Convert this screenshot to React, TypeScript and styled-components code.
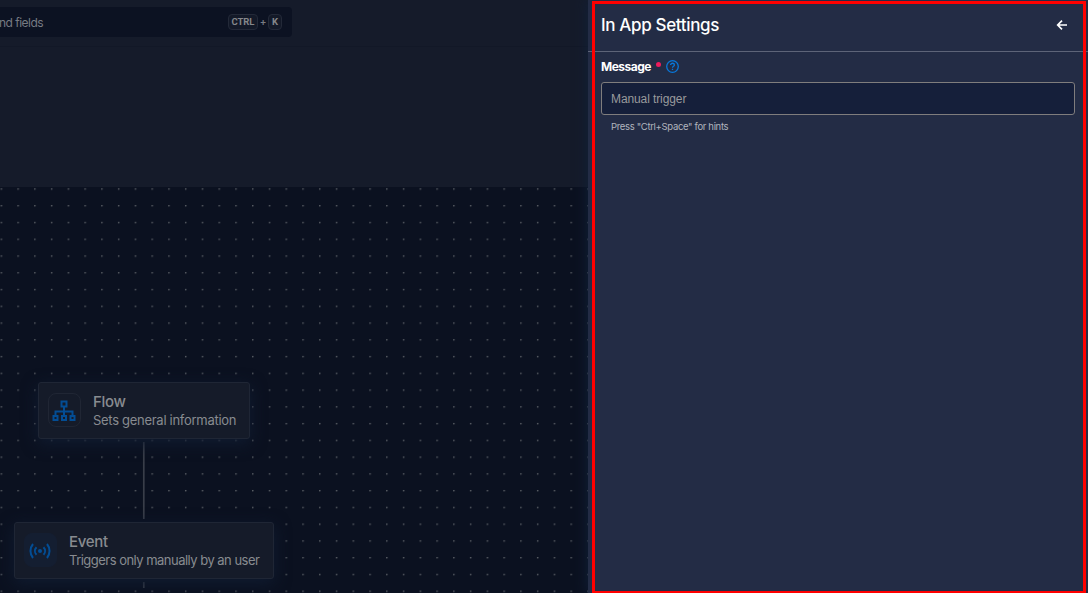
import React from "react";
import styled, { createGlobalStyle } from "styled-components";

const GlobalStyle = createGlobalStyle`
  * { box-sizing: border-box; }
  body { margin: 0; overflow: hidden; background: #0b1120; font-family: Inter, "Liberation Sans", sans-serif; }
`;

const Screen = styled.div`
  position: relative;
  display: flex;
  width: 1088px;
  height: 593px;
  overflow: hidden;
`;

const Workspace = styled.main`
  width: 588px;
  display: flex;
  flex-direction: column;
  background: #151b2a;
`;

const TopBar = styled.header`
  height: 47px;
  flex: none;
  padding-top: 7px;
  border-bottom: 1px solid #121827;
`;

const SearchBox = styled.div`
  width: 292px;
  height: 30px;
  padding-right: 10px;
  display: flex;
  align-items: center;
  border-radius: 0 4px 4px 0;
  background: #0c1222;
  color: #777b83;
`;

const SearchText = styled.span`
  flex: 1;
  font-size: 12px;
  line-height: 16px;
  letter-spacing: -0.52px;
  margin-left: -1px;
  padding-top: 2px;
  white-space: nowrap;
`;

const Key = styled.kbd<{ $width: number }>`
  width: ${(p) => p.$width}px;
  height: 16px;
  display: flex;
  align-items: center;
  justify-content: center;
  border: 1px solid #232938;
  border-radius: 4px;
  background: #131928;
  color: #85878b;
  font: 700 9.5px/14px Roboto, sans-serif;
  letter-spacing: -0.1px;
`;

const Plus = styled.span`
  width: 10px;
  padding-bottom: 2px;
  text-align: center;
  font-size: 10px;
  font-weight: 600;
  line-height: 14px;
`;

const Toolbar = styled.div`
  height: 140px;
  flex: none;
`;

const Canvas = styled.section`
  position: relative;
  flex: 1;
  background: #0b1120;
`;

const CanvasArt = styled.svg`
  position: absolute;
  inset: 0;
`;

const Node = styled.article<{ $x: number; $y: number; $width: number }>`
  position: absolute;
  left: ${(p) => p.$x}px;
  top: ${(p) => p.$y}px;
  width: ${(p) => p.$width}px;
  height: 56.5px;
  padding: 0 9px;
  display: flex;
  align-items: center;
  gap: 12px;
  border: 1px solid #1f2635;
  border-radius: 3px;
  background: #151b29;
  box-shadow: 0 4px 16px #101c31;
`;

const NodeIcon = styled.div<{ $filled?: boolean }>`
  width: 33px;
  height: 34px;
  flex: none;
  display: flex;
  align-items: center;
  justify-content: center;
  padding: 1px 1px 0 0;
  border: 1px solid ${(p) => (p.$filled ? "#141e31" : "#202634")};
  border-radius: 8px;
  background: ${(p) => (p.$filled ? "#141e31" : "transparent")};
  color: #034d94;
`;

const NodeText = styled.div`
  padding-top: 1px;
  color: #888b90;
  white-space: nowrap;
`;

const NodeTitle = styled.h2<{ $spacing: number }>`
  margin: 0;
  font-size: 15px;
  line-height: 19px;
  font-weight: 500;
  letter-spacing: ${(p) => p.$spacing}px;
`;

const NodeCaption = styled.p<{ $spacing: number }>`
  margin: 0;
  font-size: 13px;
  line-height: 19px;
  letter-spacing: ${(p) => p.$spacing}px;
`;

const Drawer = styled.aside`
  position: relative;
  width: 500px;
  background: #232c45;
  box-shadow: 0 0 12px #10203a;
  color: #fff;
`;

const DrawerHeader = styled.header`
  height: 52px;
  padding: 0 19px 1px 13px;
  display: flex;
  align-items: center;
  justify-content: space-between;
  border-bottom: 1px solid #5d6478;
`;

const DrawerTitle = styled.h1`
  margin: 0;
  font-size: 17px;
  line-height: 24px;
  font-weight: 500;
  letter-spacing: -0.35px;
`;

const BackButton = styled.button`
  width: 14px;
  height: 14px;
  padding: 0;
  display: flex;
  border: 0;
  background: none;
  color: #fff;
`;

const Form = styled.form`
  padding: 7px 13px;
`;

const LabelRow = styled.div`
  height: 16px;
  display: flex;
  align-items: center;
`;

const Label = styled.label`
  font-size: 12px;
  line-height: 16px;
  font-weight: 700;
  letter-spacing: -0.5px;
`;

const RequiredDot = styled.i`
  width: 5px;
  height: 5px;
  margin: -6px 5px 0;
  border-radius: 50%;
  background: #ee1b5b;
`;

const HelpIcon = styled.svg`
  margin-bottom: 2px;
`;

const Field = styled.div`
  height: 33px;
  margin-top: 7px;
  padding: 0 9px;
  display: flex;
  align-items: center;
  border: 1px solid #7f7d7d;
  border-radius: 3px;
  background: #151f3a;
  color: #999a9c;
  font-family: "Liberation Sans", Arial, sans-serif;
  font-size: 12px;
  letter-spacing: -0.1px;
`;

const Hint = styled.p`
  margin: 4px 0 0 10px;
  color: #b1b5be;
  font-size: 9.5px;
  line-height: 16px;
  letter-spacing: -0.33px;
`;

const Highlight = styled.div`
  position: absolute;
  left: 592px;
  top: 1px;
  width: 494px;
  height: 593px;
  border: 3px solid #ff0000;
  pointer-events: none;
`;

const FlowGlyph = () => (
  <svg width="24" height="22" viewBox="0 0 24 22" fill="none" stroke="currentColor" strokeWidth="2">
    <path d="M9.5 1.5h5v5h-5zM1.5 16h4v4h-4zM10 16h4v4h-4zM18.5 16h4v4h-4zM12 7v9M3.5 16v-4.5h17V16" />
  </svg>
);

const SignalGlyph = () => (
  <svg width="22" height="16" viewBox="0 0 22 16" fill="none" stroke="currentColor" strokeWidth="2">
    <circle cx="11" cy="8" r="2" fill="currentColor" stroke="none" />
    <path d="M7.5 4.2a5.5 5.5 0 0 0 0 7.6M14.5 4.2a5.5 5.5 0 0 1 0 7.6M4 1a11 11 0 0 0 0 14M18 1a11 11 0 0 1 0 14" />
  </svg>
);

export default function App() {
  return (
    <>
      <GlobalStyle />
      <Screen>
        <Workspace>
          <TopBar>
            <SearchBox>
              <SearchText>nd fields</SearchText>
              <Key $width={30}>CTRL</Key>
              <Plus>+</Plus>
              <Key $width={14}>K</Key>
            </SearchBox>
          </TopBar>
          <Toolbar />
          <Canvas>
            <CanvasArt width="588" height="406">
              <defs>
                <pattern id="dots" x="0.6" y="1.3" width="16.76" height="16.76" patternUnits="userSpaceOnUse">
                  <circle cx="0.8" cy="0.8" r="0.75" fill="#72757a" />
                </pattern>
              </defs>
              <rect width="588" height="406" fill="url(#dots)" />
              <path d="M143.8 255v77M143.8 395v6" stroke="#393e49" strokeWidth="1.7" />
            </CanvasArt>
            <Node $x={38} $y={195} $width={212}>
              <NodeIcon><FlowGlyph /></NodeIcon>
              <NodeText>
                <NodeTitle $spacing={-0.3}>Flow</NodeTitle>
                <NodeCaption $spacing={-0.29}>Sets general information</NodeCaption>
              </NodeText>
            </Node>
            <Node $x={14} $y={335} $width={260}>
              <NodeIcon $filled><SignalGlyph /></NodeIcon>
              <NodeText>
                <NodeTitle $spacing={-0.3}>Event</NodeTitle>
                <NodeCaption $spacing={-0.52}>Triggers only manually by an user</NodeCaption>
              </NodeText>
            </Node>
          </Canvas>
        </Workspace>
        <Drawer>
          <DrawerHeader>
            <DrawerTitle>In App Settings</DrawerTitle>
            <BackButton type="button" aria-label="Back">
              <svg width="14" height="14" viewBox="0 0 14 14" fill="none" stroke="currentColor" strokeWidth="1.7">
                <path d="M12 7H2.7M7 2.7 2.7 7 7 11.3" />
              </svg>
            </BackButton>
          </DrawerHeader>
          <Form>
            <LabelRow>
              <Label>Message</Label>
              <RequiredDot />
              <HelpIcon width="13" height="13" viewBox="0 0 13 13" fill="none" stroke="#0878db" strokeWidth="1.3">
                <circle cx="6.5" cy="6.5" r="5.8" />
                <path d="M4.6 5.1c0-2.6 3.8-2.3 3.8-.2 0 1.4-1.9 1.3-1.9 2.8M6.5 8.8v1.3" />
              </HelpIcon>
            </LabelRow>
            <Field>Manual trigger</Field>
            <Hint>Press "Ctrl+Space" for hints</Hint>
          </Form>
        </Drawer>
        <Highlight />
      </Screen>
    </>
  );
}
